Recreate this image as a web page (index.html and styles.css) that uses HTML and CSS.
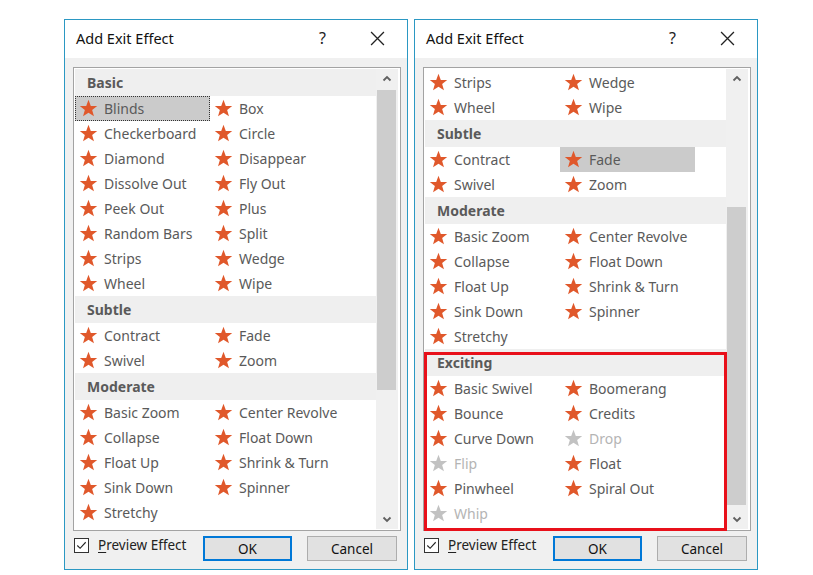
FILE: index.html
```html
<!DOCTYPE html>
<html>
<head>
<meta charset="utf-8">
<link rel="stylesheet" href="styles.css">
</head>
<body>
<svg width="0" height="0" class="defs">
  <defs>
    <symbol id="star" viewBox="0 0 24 24"><path d="M12 1 L14.9 8.7 L23 8.9 L16.6 13.9 L18.9 21.9 L12 17.3 L5.1 21.9 L7.4 13.9 L1 8.9 L9.1 8.7 Z"/></symbol>
    <symbol id="up" viewBox="0 0 10 10"><path d="M1.5 6.5 L5 3 L8.5 6.5" fill="none" stroke="currentColor" stroke-width="1.8"/></symbol>
    <symbol id="down" viewBox="0 0 10 10"><path d="M1.5 3.5 L5 7 L8.5 3.5" fill="none" stroke="currentColor" stroke-width="1.8"/></symbol>
    <symbol id="close" viewBox="0 0 14 14"><path d="M1 1 L13 13 M13 1 L1 13" fill="none" stroke="currentColor" stroke-width="1.2"/></symbol>
    <symbol id="check" viewBox="0 0 14 14"><path d="M2.5 7 L5.5 10 L11.5 3.5" fill="none" stroke="currentColor" stroke-width="1.2"/></symbol>
  </defs>
</svg>
<div class="stage">
  <div class="dialog">
    <div class="titlebar">
      <span class="title">Add Exit Effect</span>
      <span class="help">?</span>
      <svg class="close"><use href="#close"/></svg>
    </div>
    <div class="body">
      <div class="listbox">
        <div class="items">
          <div class="group">Basic</div>
          <div class="row"><div class="cell focused"><svg class="star"><use href="#star"/></svg>Blinds</div><div class="cell"><svg class="star"><use href="#star"/></svg>Box</div></div>
          <div class="row"><div class="cell"><svg class="star"><use href="#star"/></svg>Checkerboard</div><div class="cell"><svg class="star"><use href="#star"/></svg>Circle</div></div>
          <div class="row"><div class="cell"><svg class="star"><use href="#star"/></svg>Diamond</div><div class="cell"><svg class="star"><use href="#star"/></svg>Disappear</div></div>
          <div class="row"><div class="cell"><svg class="star"><use href="#star"/></svg>Dissolve Out</div><div class="cell"><svg class="star"><use href="#star"/></svg>Fly Out</div></div>
          <div class="row"><div class="cell"><svg class="star"><use href="#star"/></svg>Peek Out</div><div class="cell"><svg class="star"><use href="#star"/></svg>Plus</div></div>
          <div class="row"><div class="cell"><svg class="star"><use href="#star"/></svg>Random Bars</div><div class="cell"><svg class="star"><use href="#star"/></svg>Split</div></div>
          <div class="row"><div class="cell"><svg class="star"><use href="#star"/></svg>Strips</div><div class="cell"><svg class="star"><use href="#star"/></svg>Wedge</div></div>
          <div class="row"><div class="cell"><svg class="star"><use href="#star"/></svg>Wheel</div><div class="cell"><svg class="star"><use href="#star"/></svg>Wipe</div></div>
          <div class="group">Subtle</div>
          <div class="row"><div class="cell"><svg class="star"><use href="#star"/></svg>Contract</div><div class="cell"><svg class="star"><use href="#star"/></svg>Fade</div></div>
          <div class="row"><div class="cell"><svg class="star"><use href="#star"/></svg>Swivel</div><div class="cell"><svg class="star"><use href="#star"/></svg>Zoom</div></div>
          <div class="group">Moderate</div>
          <div class="row"><div class="cell"><svg class="star"><use href="#star"/></svg>Basic Zoom</div><div class="cell"><svg class="star"><use href="#star"/></svg>Center Revolve</div></div>
          <div class="row"><div class="cell"><svg class="star"><use href="#star"/></svg>Collapse</div><div class="cell"><svg class="star"><use href="#star"/></svg>Float Down</div></div>
          <div class="row"><div class="cell"><svg class="star"><use href="#star"/></svg>Float Up</div><div class="cell"><svg class="star"><use href="#star"/></svg>Shrink &amp; Turn</div></div>
          <div class="row"><div class="cell"><svg class="star"><use href="#star"/></svg>Sink Down</div><div class="cell"><svg class="star"><use href="#star"/></svg>Spinner</div></div>
          <div class="row"><div class="cell"><svg class="star"><use href="#star"/></svg>Stretchy</div></div>
        </div>
        <div class="scrollbar">
          <div class="sb-btn"><svg class="chev"><use href="#up"/></svg></div>
          <div class="track"><div class="thumb thumb-top"></div></div>
          <div class="sb-btn"><svg class="chev"><use href="#down"/></svg></div>
        </div>
      </div>
      <div class="footer">
        <div class="preview"><span class="checkbox"><svg class="tick"><use href="#check"/></svg></span><span class="plabel"><u>P</u>review Effect</span></div>
        <button class="btn btn-default">OK</button>
        <button class="btn">Cancel</button>
      </div>
    </div>
  </div>

  <div class="dialog">
    <div class="titlebar">
      <span class="title">Add Exit Effect</span>
      <span class="help">?</span>
      <svg class="close"><use href="#close"/></svg>
    </div>
    <div class="body">
      <div class="listbox">
        <div class="items items-scrolled">
          <div class="row"><div class="cell"><svg class="star"><use href="#star"/></svg>Strips</div><div class="cell"><svg class="star"><use href="#star"/></svg>Wedge</div></div>
          <div class="row"><div class="cell"><svg class="star"><use href="#star"/></svg>Wheel</div><div class="cell"><svg class="star"><use href="#star"/></svg>Wipe</div></div>
          <div class="group">Subtle</div>
          <div class="row"><div class="cell"><svg class="star"><use href="#star"/></svg>Contract</div><div class="cell selected"><svg class="star"><use href="#star"/></svg>Fade</div></div>
          <div class="row"><div class="cell"><svg class="star"><use href="#star"/></svg>Swivel</div><div class="cell"><svg class="star"><use href="#star"/></svg>Zoom</div></div>
          <div class="group">Moderate</div>
          <div class="row"><div class="cell"><svg class="star"><use href="#star"/></svg>Basic Zoom</div><div class="cell"><svg class="star"><use href="#star"/></svg>Center Revolve</div></div>
          <div class="row"><div class="cell"><svg class="star"><use href="#star"/></svg>Collapse</div><div class="cell"><svg class="star"><use href="#star"/></svg>Float Down</div></div>
          <div class="row"><div class="cell"><svg class="star"><use href="#star"/></svg>Float Up</div><div class="cell"><svg class="star"><use href="#star"/></svg>Shrink &amp; Turn</div></div>
          <div class="row"><div class="cell"><svg class="star"><use href="#star"/></svg>Sink Down</div><div class="cell"><svg class="star"><use href="#star"/></svg>Spinner</div></div>
          <div class="row"><div class="cell"><svg class="star"><use href="#star"/></svg>Stretchy</div></div>
          <div class="group">Exciting</div>
          <div class="row"><div class="cell"><svg class="star"><use href="#star"/></svg>Basic Swivel</div><div class="cell"><svg class="star"><use href="#star"/></svg>Boomerang</div></div>
          <div class="row"><div class="cell"><svg class="star"><use href="#star"/></svg>Bounce</div><div class="cell"><svg class="star"><use href="#star"/></svg>Credits</div></div>
          <div class="row"><div class="cell"><svg class="star"><use href="#star"/></svg>Curve Down</div><div class="cell disabled"><svg class="star"><use href="#star"/></svg>Drop</div></div>
          <div class="row"><div class="cell disabled"><svg class="star"><use href="#star"/></svg>Flip</div><div class="cell"><svg class="star"><use href="#star"/></svg>Float</div></div>
          <div class="row"><div class="cell"><svg class="star"><use href="#star"/></svg>Pinwheel</div><div class="cell"><svg class="star"><use href="#star"/></svg>Spiral Out</div></div>
          <div class="row"><div class="cell disabled"><svg class="star"><use href="#star"/></svg>Whip</div></div>
        </div>
        <div class="scrollbar">
          <div class="sb-btn"><svg class="chev"><use href="#up"/></svg></div>
          <div class="track"><div class="thumb thumb-low"></div></div>
          <div class="sb-btn"><svg class="chev"><use href="#down"/></svg></div>
        </div>
      </div>
      <div class="footer">
        <div class="preview"><span class="checkbox"><svg class="tick"><use href="#check"/></svg></span><span class="plabel"><u>P</u>review Effect</span></div>
        <button class="btn btn-default">OK</button>
        <button class="btn">Cancel</button>
      </div>
    </div>
    <div class="callout"></div>
  </div>
</div>
</body>
</html>
```
FILE: styles.css
```css
* { box-sizing: border-box; }
html, body { margin: 0; padding: 0; background: #ffffff; }
body { font-family: "Noto Sans", "Open Sans", sans-serif; color: #5a5a5a; }
.defs { position: absolute; width: 0; height: 0; }

.stage {
  display: flex;
  gap: 6px;
  padding: 19px 0 0 64px;
}

.dialog {
  position: relative;
  width: 344px;
  height: 551px;
  border: 1px solid #2b98c3;
  background: #f0f0f0;
  display: flex;
  flex-direction: column;
}

.titlebar {
  height: 38px;
  background: #ffffff;
  display: flex;
  align-items: center;
  padding-left: 11px;
  padding-bottom: 2px;
  color: #111;
}
.title { font-size: 14.5px; width: 239px; }
.help { font-size: 16px; width: 15px; text-align: center; color: #222; }
.close { width: 15px; height: 15px; margin-left: 40px; color: #222; }

.body {
  flex: 1;
  padding: 9px 10px 0 8px;
  display: flex;
  flex-direction: column;
}

.listbox {
  width: 328px;
  height: 464px;
  border: 1px solid #a3a3a3;
  background: #ffffff;
  display: flex;
  padding: 1px 2px 1px 1px;
  overflow: hidden;
}

.items { width: 301px; display: flex; flex-direction: column; overflow: hidden; }
.items-scrolled { padding-top: 1px; }

.group {
  height: 27px;
  flex: none;
  background: #efefef;
  font-weight: bold;
  font-size: 14px;
  line-height: 27px;
  padding-left: 12px;
  color: #5a5a5a;
}

.row { display: flex; height: 25px; flex: none; }
.cell {
  width: 135px;
  height: 25px;
  display: flex;
  align-items: center;
  padding-left: 4px;
  font-size: 14px;
  color: #5a5a5a;
  white-space: nowrap;
}
.star { width: 19px; height: 19px; fill: #e0582b; margin-right: 6px; flex: none; }
.cell.focused { background: #cbcbcb; border: 1px dotted #333; padding-left: 3px; }
.cell.selected { background: #cbcbcb; }
.cell.disabled { color: #b4b4b4; }
.cell.disabled .star { fill: #c2c2c2; }

.scrollbar {
  width: 22px;
  background: #f0f0f0;
  display: flex;
  flex-direction: column;
}
.sb-btn {
  height: 20px;
  flex: none;
  display: flex;
  align-items: center;
  justify-content: center;
  color: #606060;
}
.chev { width: 10px; height: 10px; }
.track { flex: 1; padding: 1px 2px 0 1px; }
.thumb { background: #cdcdcd; }
.thumb-top { height: 300px; }
.thumb-low { margin-top: 117px; height: 298px; }

.footer {
  display: flex;
  align-items: center;
  margin-top: 5px;
  height: 25px;
}
.preview { display: flex; align-items: center; flex: 1; padding-left: 1px; margin-bottom: 7px; color: #222; }
.checkbox {
  width: 15px;
  height: 15px;
  border: 1px solid #333;
  background: #fff;
  display: flex;
  align-items: center;
  justify-content: center;
  margin-right: 9px;
}
.tick { width: 13px; height: 13px; color: #222; }
.plabel { font-size: 13.5px; color: #222; }
.plabel u { text-decoration-thickness: 1px; text-underline-offset: 2px; }

.btn {
  font-family: "Noto Sans", "Open Sans", sans-serif;
  font-size: 13.5px;
  color: #111;
  height: 25px;
  width: 90px;
  background: #e1e1e1;
  border: 1px solid #adadad;
  padding: 0;
  margin-left: 15px;
}
.btn-default { width: 89px; border: 2px solid #0078d7; margin-left: 0; }

.callout {
  position: absolute;
  left: 9px;
  top: 332px;
  width: 303px;
  height: 179px;
  border: 3px solid #e8101a;
  pointer-events: none;
}
```
